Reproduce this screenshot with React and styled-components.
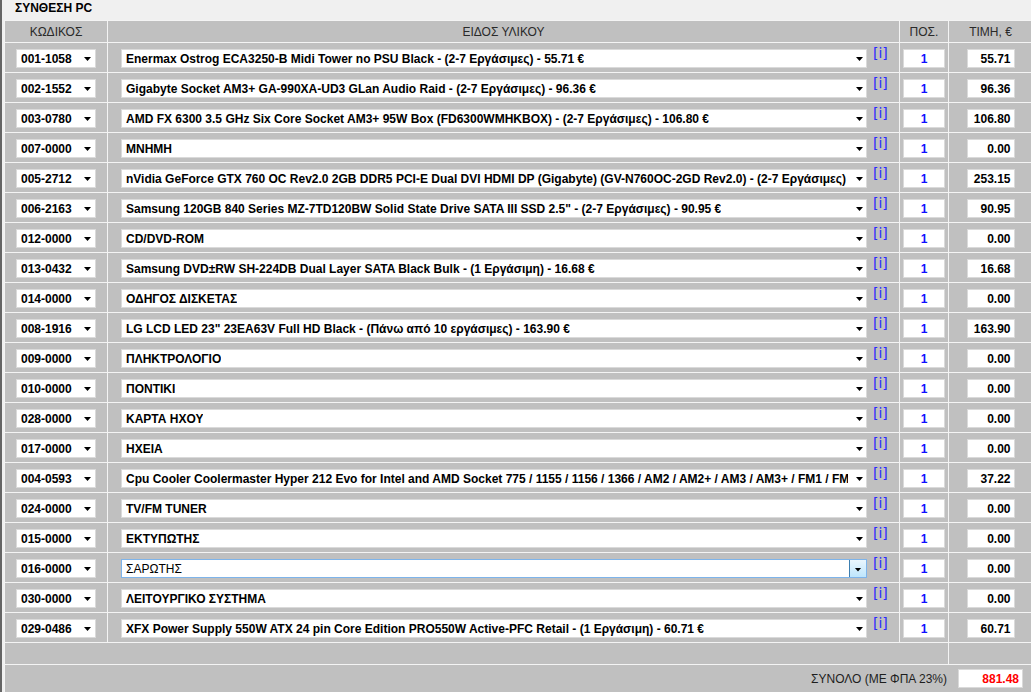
import React from 'react'
import styled, { createGlobalStyle } from 'styled-components'

const Global = createGlobalStyle`
  html, body {
    margin: 0;
    padding: 0;
    background: #f0f0f0;
    overflow: hidden;
  }
  body {
    font-family: "Liberation Sans", Arial, sans-serif;
  }
`

const items = [
  ['001-1058', 'Enermax Ostrog ECA3250-B Midi Tower no PSU Black - (2-7 Εργάσιμες) - 55.71 €', '55.71'],
  ['002-1552', 'Gigabyte Socket AM3+ GA-990XA-UD3 GLan Audio Raid - (2-7 Εργάσιμες) - 96.36 €', '96.36'],
  ['003-0780', 'AMD FX 6300 3.5 GHz Six Core Socket AM3+ 95W Box (FD6300WMHKBOX) - (2-7 Εργάσιμες) - 106.80 €', '106.80'],
  ['007-0000', 'ΜΝΗΜΗ', '0.00'],
  ['005-2712', 'nVidia GeForce GTX 760 OC Rev2.0 2GB DDR5 PCI-E Dual DVI HDMI DP (Gigabyte) (GV-N760OC-2GD Rev2.0) - (2-7 Εργάσιμες) - 253.15 €', '253.15'],
  ['006-2163', 'Samsung 120GB 840 Series MZ-7TD120BW Solid State Drive SATA III SSD 2.5" - (2-7 Εργάσιμες) - 90.95 €', '90.95'],
  ['012-0000', 'CD/DVD-ROM', '0.00'],
  ['013-0432', 'Samsung DVD±RW SH-224DB Dual Layer SATA Black Bulk - (1 Εργάσιμη) - 16.68 €', '16.68'],
  ['014-0000', 'ΟΔΗΓΟΣ ΔΙΣΚΕΤΑΣ', '0.00'],
  ['008-1916', 'LG LCD LED 23" 23EA63V Full HD Black - (Πάνω από 10 εργάσιμες) - 163.90 €', '163.90'],
  ['009-0000', 'ΠΛΗΚΤΡΟΛΟΓΙΟ', '0.00'],
  ['010-0000', 'ΠΟΝΤΙΚΙ', '0.00'],
  ['028-0000', 'ΚΑΡΤΑ ΗΧΟΥ', '0.00'],
  ['017-0000', 'ΗΧΕΙΑ', '0.00'],
  ['004-0593', 'Cpu Cooler Coolermaster Hyper 212 Evo for Intel and AMD Socket 775 / 1155 / 1156 / 1366 / AM2 / AM2+ / AM3 / AM3+ / FM1 / FM2 - (2-7 Εργάσιμες) - 37.22 €', '37.22'],
  ['024-0000', 'TV/FM TUNER', '0.00'],
  ['015-0000', 'ΕΚΤΥΠΩΤΗΣ', '0.00'],
  ['016-0000', 'ΣΑΡΩΤΗΣ', '0.00', true],
  ['030-0000', 'ΛΕΙΤΟΥΡΓΙΚΟ ΣΥΣΤΗΜΑ', '0.00'],
  ['029-0486', 'XFX Power Supply 550W ATX 24 pin Core Edition PRO550W Active-PFC Retail - (1 Εργάσιμη) - 60.71 €', '60.71'],
]

const Page = styled.div`
  height: 692px;
  border-left: 2px solid #656565;
  padding-left: 2px;
  box-sizing: border-box;
`

const Title = styled.div`
  height: 20px;
  padding-left: 11px;
  padding-top: 2px;
  box-sizing: border-box;
  font-size: 12px;
  font-weight: bold;
  color: #000;
  line-height: 12px;
`

const Table = styled.div`
  display: grid;
  grid-template-columns: 102px 791px 48px 83px;
  grid-template-rows: 21px repeat(20, 29px) 21px 30px;
  gap: 1px;
  width: max-content;
  background: #f4f4f4;
  border-top: 1px solid #f4f4f4;
  border-left: 1px solid #f4f4f4;
`

const HeadCell = styled.div`
  background: #c0c0c0;
  display: flex;
  align-items: center;
  justify-content: center;
  font-size: 12px;
  color: #2a2a2a;
`

const Cell = styled.div`
  background: #c0c0c0;
  display: flex;
  align-items: flex-start;
  justify-content: ${p => (p.$left ? 'flex-start' : 'center')};
  padding-top: 6px;
  padding-left: ${p => (p.$left ? '13px' : '0')};
  box-sizing: border-box;
  grid-column: ${p => (p.$span ? `span ${p.$span}` : 'auto')};
`

const Combo = styled.div`
  position: relative;
  width: ${p => p.$w}px;
  height: 19px;
  box-sizing: border-box;
  background: #fff;
  border: 1px solid ${p => (p.$focus ? '#7eb4ea' : '#dadada')};
  display: flex;
  align-items: center;
  padding: 0 18px 0 ${p => p.$pad}px;
  font-size: 12px;
  font-weight: ${p => (p.$focus ? 'normal' : 'bold')};
  color: #000;
  white-space: nowrap;
  overflow: hidden;
`

const ComboText = styled.span`
  display: block;
  min-width: 0;
  overflow: hidden;
  white-space: nowrap;
  font-weight: ${p => (p.$bold ? 'bold' : 'inherit')};
`

const Arrow = styled.span`
  position: absolute;
  right: ${p => p.$right}px;
  top: 7px;
  width: 7px;
  height: 4px;
  background: #000;
  clip-path: polygon(0 0, 100% 0, 50% 100%);
`

const DropButton = styled.span`
  position: absolute;
  right: 0;
  top: 0;
  bottom: 0;
  width: 16px;
  border-left: 1px solid #3c7fb1;
  background: linear-gradient(#eaf6fd, #bee6fd);
  display: flex;
  align-items: center;
  justify-content: center;
  &::after {
    content: '';
    width: 7px;
    height: 4px;
    margin-top: 2px;
    background: #000;
    clip-path: polygon(0 0, 100% 0, 50% 100%);
  }
`

const Info = styled.a`
  margin-left: 6px;
  margin-top: -3px;
  font-size: 14px;
  line-height: 14px;
  color: #2a2aff;
  text-decoration: none;
  font-family: "DejaVu Sans", "Liberation Sans", sans-serif;
  font-weight: normal;
`

const Box = styled.div`
  width: ${p => p.$w}px;
  height: 19px;
  box-sizing: border-box;
  background: #fff;
  border: 1px solid #dadada;
  display: flex;
  align-items: center;
  justify-content: ${p => (p.$right ? 'flex-end' : 'center')};
  padding-right: ${p => (p.$right ? '3px' : '0')};
  font-size: 12px;
  font-weight: bold;
  color: ${p => p.$color || '#000'};
`

const TotalCell = styled.div`
  grid-column: span 4;
  background: #c0c0c0;
  display: flex;
  align-items: flex-start;
  justify-content: flex-end;
  padding: 4px 9px 0 0;
  gap: 11px;
  box-sizing: border-box;
`

const TotalLabel = styled.span`
  font-size: 12px;
  color: #1e1e1e;
  margin-top: 3px;
`

export default function App() {
  return (
    <>
      <Global />
      <Page>
        <Title>ΣΥΝΘΕΣΗ PC</Title>
        <Table>
          <HeadCell>ΚΩΔΙΚΟΣ</HeadCell>
          <HeadCell>ΕΙΔΟΣ ΥΛΙΚΟΥ</HeadCell>
          <HeadCell>ΠΟΣ.</HeadCell>
          <HeadCell>ΤΙΜΗ, €</HeadCell>
          {items.map(([code, desc, price, focus]) => (
            <React.Fragment key={code}>
              <Cell>
                <Combo $w={80} $pad={4}>
                  <ComboText $bold>{code}</ComboText>
                  <Arrow $right={4} />
                </Combo>
              </Cell>
              <Cell $left>
                <Combo $w={746} $pad={4} $focus={focus}>
                  <ComboText>{desc}</ComboText>
                  {focus ? <DropButton /> : <Arrow $right={3} />}
                </Combo>
                <Info href="#">[i]</Info>
              </Cell>
              <Cell>
                <Box $w={42} $color="#1010ff">1</Box>
              </Cell>
              <Cell>
                <Box $w={48} $right>{price}</Box>
              </Cell>
            </React.Fragment>
          ))}
          <Cell $span={3} />
          <Cell />
          <TotalCell>
            <TotalLabel>ΣΥΝΟΛΟ (ΜΕ ΦΠΑ 23%)</TotalLabel>
            <Box $w={65} $right $color="#ff0000">881.48</Box>
          </TotalCell>
        </Table>
      </Page>
    </>
  )
}
